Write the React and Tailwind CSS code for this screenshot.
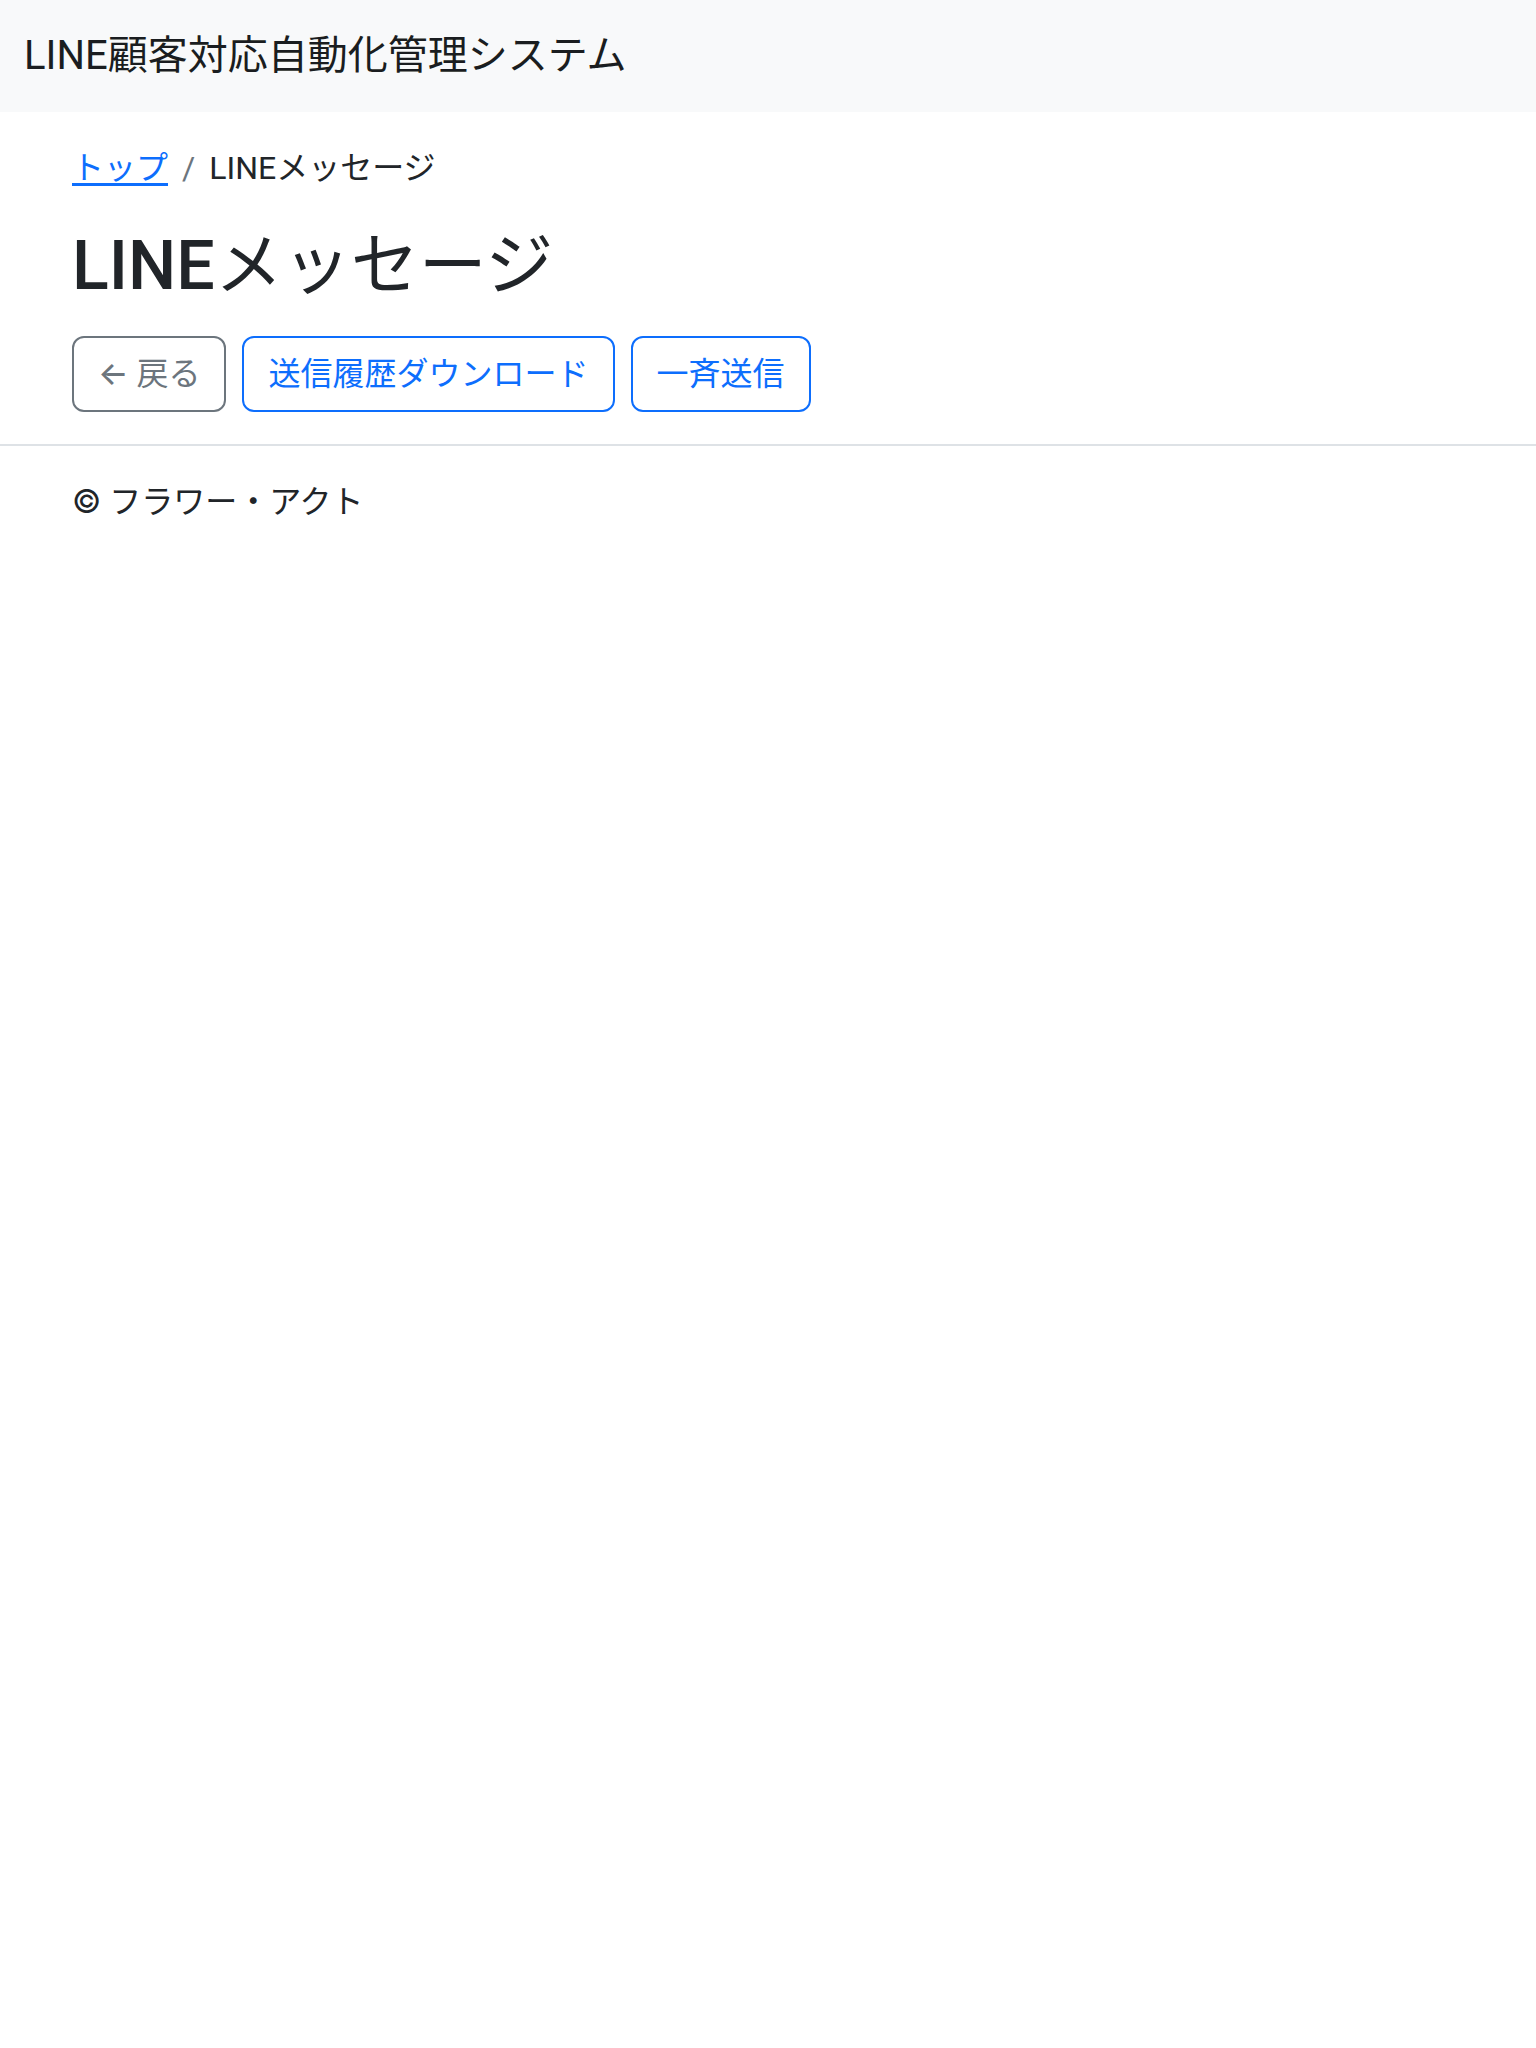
export default function App() {
  const button =
    "rounded-xl border-2 px-6 py-3 text-[32px] leading-[48px]";
  return (
    <div className="min-h-screen bg-white font-['Roboto','Inter','Noto_Sans_CJK_JP',sans-serif] text-[32px] leading-[48px] text-[#212529]">
      <header className="flex h-28 items-center bg-[#f8f9fa] px-6">
        <a href="#" className="text-[40px] leading-[60px] text-[#1a1d20]">
          LINE顧客対応自動化管理システム
        </a>
      </header>
      <main className="px-18 pt-8">
        <nav aria-label="breadcrumb">
          <ol className="flex items-center gap-3.5">
            <li>
              <a href="#" className="text-[#0d6efd] underline decoration-3 underline-offset-4">トップ</a>
            </li>
            <li aria-hidden="true" className="text-[#6c757d]">/</li>
            <li aria-current="page">LINEメッセージ</li>
          </ol>
        </nav>
        <h1 className="mt-8 text-[68px] leading-[84px] font-normal"><span className="font-medium">LINE</span>メッセージ</h1>
        <div className="mt-7 flex flex-wrap gap-4">
          <button type="button" className={`${button} border-[#6c757d] text-[#6c757d]`}><span className="font-medium">←</span> 戻る</button>
          <button type="button" className={`${button} border-[#0d6efd] text-[#0d6efd]`}>送信履歴ダウンロード</button>
          <button type="button" className={`${button} border-[#0d6efd] text-[#0d6efd]`}>一斉送信</button>
        </div>
      </main>
      <footer className="mt-8 border-t-2 border-[#dee2e6] px-18 py-8">
        <span className="font-['Inter',sans-serif]">©</span> フラワー・アクト
      </footer>
    </div>
  );
}
